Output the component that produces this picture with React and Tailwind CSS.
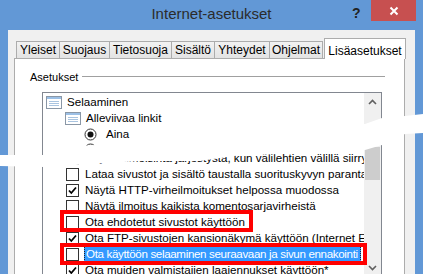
import React from 'react'

const ui = { fontFamily: '"Liberation Sans", Arial, sans-serif' }

function TreeIcon() {
  return (
    <svg width="16" height="13" viewBox="0 0 16 13" className="shrink-0">
      <rect x="0.5" y="0.5" width="15" height="12" fill="#fff" stroke="#8a97a6" />
      <rect x="1" y="1" width="14" height="2" fill="#9cc0e6" />
      <line x1="3" y1="5.5" x2="13" y2="5.5" stroke="#a9c4e0" />
      <line x1="3" y1="7.5" x2="13" y2="7.5" stroke="#a9c4e0" />
      <line x1="3" y1="9.5" x2="13" y2="9.5" stroke="#a9c4e0" />
    </svg>
  )
}

function Radio({ on }) {
  return (
    <svg width="13" height="13" viewBox="0 0 13 13" className="shrink-0">
      <circle cx="6.5" cy="6.5" r="5.5" fill="#fff" stroke="#333" />
      {on && <circle cx="6.5" cy="6.5" r="3" fill="#111" />}
    </svg>
  )
}

function Check({ on }) {
  return (
    <div className="w-[13px] h-[13px] shrink-0 border border-[#333] bg-white flex items-center justify-center">
      {on && (
        <svg width="9" height="9" viewBox="0 0 9 9">
          <path d="M1 4.5 L3.3 7 L8 1.5" fill="none" stroke="#000" strokeWidth="1.8" />
        </svg>
      )}
    </div>
  )
}

function Row({ children, pad, className = '' }) {
  return (
    <div className={'h-[16px] flex items-center whitespace-nowrap ' + className} style={{ paddingLeft: pad }}>
      {children}
    </div>
  )
}

function CheckRow({ on, text, selected }) {
  return (
    <Row pad={23}>
      <Check on={on} />
      <span
        className={
          'ml-[5px] leading-[14px] px-[1px] ' +
          (selected
            ? 'bg-[#3399ff] text-white border border-dotted border-[#222] -ml-[1px] pr-[2px] tracking-[-0.35px]'
            : 'text-black')
        }
      >
        {text}
      </span>
    </Row>
  )
}

const tabs = [
  ['Yleiset', 'w-[44px]'],
  ['Suojaus', 'w-[51px]'],
  ['Tietosuoja', 'w-[63px]'],
  ['Sisältö', 'w-[44px]'],
  ['Yhteydet', 'w-[56px]'],
  ['Ohjelmat', 'w-[54px]'],
]

export default function App() {
  return (
    <div className="w-[423px] h-[274px] relative overflow-hidden bg-[#6298d6] flex flex-col" style={ui}>
      {/* title bar */}
      <div className="h-[30px] shrink-0 relative flex items-center justify-center">
        <span className="text-[15px] text-[#2b2b2b] -mt-[1px]">Internet-asetukset</span>
        <span className="absolute left-[352px] top-[3px] text-[14px] font-bold text-[#222]">?</span>
        <div className="absolute left-[371px] top-0 w-[45px] h-[21px] bg-[#c75050] flex items-center justify-center">
          <svg width="10" height="10" viewBox="0 0 10 10">
            <path d="M1.5 1.5 L8.5 8.5 M8.5 1.5 L1.5 8.5" stroke="#fff" strokeWidth="2" />
          </svg>
        </div>
      </div>

      {/* dialog body */}
      <div className="mx-[8px] flex-1 bg-[#f0f0f0] flex flex-col">
        <div className="h-[28px] shrink-0 flex items-end pl-[8px] relative z-10">
          {tabs.map(([t, w]) => (
            <div
              key={t}
              className={
                w +
                ' h-[17px] shrink-0 -mr-[1px] border border-b-0 border-[#acacac] bg-gradient-to-b from-[#f2f2f2] to-[#e3e3e3] text-[12px] text-black flex items-center justify-center'
              }
            >
              {t}
            </div>
          ))}
          <div className="w-[82px] h-[21px] shrink-0 ml-[2px] border border-b-0 border-[#acacac] bg-white text-[12px] text-black flex items-start justify-center pt-[3px] -mb-[1px]">
            Lisäasetukset
          </div>
        </div>

        <div className="ml-[6px] mr-[10px] flex-1 bg-white border border-[#acacac] flex flex-col">
          <div className="h-[24px] shrink-0 flex items-center pl-[15px] pr-[19px] pt-[12px]">
            <span className="text-[11px] text-black">Asetukset</span>
            <div className="flex-1 ml-[4px] h-[1px] bg-[#a0a0a0] -mt-[1px]" />
          </div>

          <div className="ml-[27px] mr-[22px] mt-[9px] h-[185px] border border-[#828790] flex text-[11.6px]">
            <div className="flex-1 overflow-hidden pt-[1px]">
              <Row pad={3}>
                <TreeIcon />
                <span className="ml-[5px]">Selaaminen</span>
              </Row>
              <Row pad={22}>
                <TreeIcon />
                <span className="ml-[5px]">Alleviivaa linkit</span>
              </Row>
              <Row pad={41}>
                <Radio on />
                <span className="ml-[9px]">Aina</span>
              </Row>
              <div className="h-[8px] flex items-start pl-[41px] pt-[1px]">
                <Radio />
              </div>
              <Row pad={23}>
                <Check on />
                <span className="ml-[6px]">Käytä viimeisintä järjestystä, kun välilehtien välillä siirrytään</span>
              </Row>
              <CheckRow text="Lataa sivustot ja sisältö taustalla suorituskyvyn parantamiseksi" />
              <CheckRow on text="Näytä HTTP-virheilmoitukset helpossa muodossa" />
              <CheckRow text="Näytä ilmoitus kaikista komentosarjavirheistä" />
              <CheckRow text="Ota ehdotetut sivustot käyttöön" />
              <CheckRow on text="Ota FTP-sivustojen kansionäkymä käyttöön (Internet Explorerin ulkopuolella)" />
              <CheckRow selected text="Ota käyttöön selaaminen seuraavaan ja sivun ennakointi" />
              <CheckRow on text="Ota muiden valmistajien laajennukset käyttöön*" />
            </div>

            {/* scrollbar */}
            <div className="w-[17px] shrink-0 bg-[#f0f0f0] flex flex-col">
              <div className="h-[17px] flex items-center justify-center">
                <svg width="9" height="6" viewBox="0 0 9 6">
                  <path d="M1 5 L4.5 1.5 L8 5" fill="none" stroke="#606060" strokeWidth="1.6" />
                </svg>
              </div>
              <div className="h-[37px]" />
              <div className="h-[33px] mx-[1px] bg-[#cdcdcd]" />
              <div className="flex-1" />
              <div className="h-[17px] flex items-center justify-center">
                <svg width="9" height="6" viewBox="0 0 9 6">
                  <path d="M1 1 L4.5 4.5 L8 1" fill="none" stroke="#606060" strokeWidth="1.6" />
                </svg>
              </div>
            </div>
          </div>
        </div>
      </div>

      {/* torn strip between the two screenshot pieces */}
      <svg className="absolute inset-0 pointer-events-none" width="423" height="274" viewBox="0 0 423 274">
        <polygon
          fill="#fff"
          points="0,155 44,155 60,150 80,146 200,138 300,128 365,124 382,118 405,116 423,114 423,133 405,134 382,145 365,150 300,153 233,156 200,161 140,161 44,167 0,166"
        />
      </svg>

      {/* red highlight boxes */}
      <div className="absolute left-[60px] top-[210px] w-[193px] h-[22px] border-[4px] border-[#ff0000]" />
      <div className="absolute left-[60px] top-[243px] w-[307px] h-[22px] border-[4px] border-[#ff0000]" />
    </div>
  )
}
